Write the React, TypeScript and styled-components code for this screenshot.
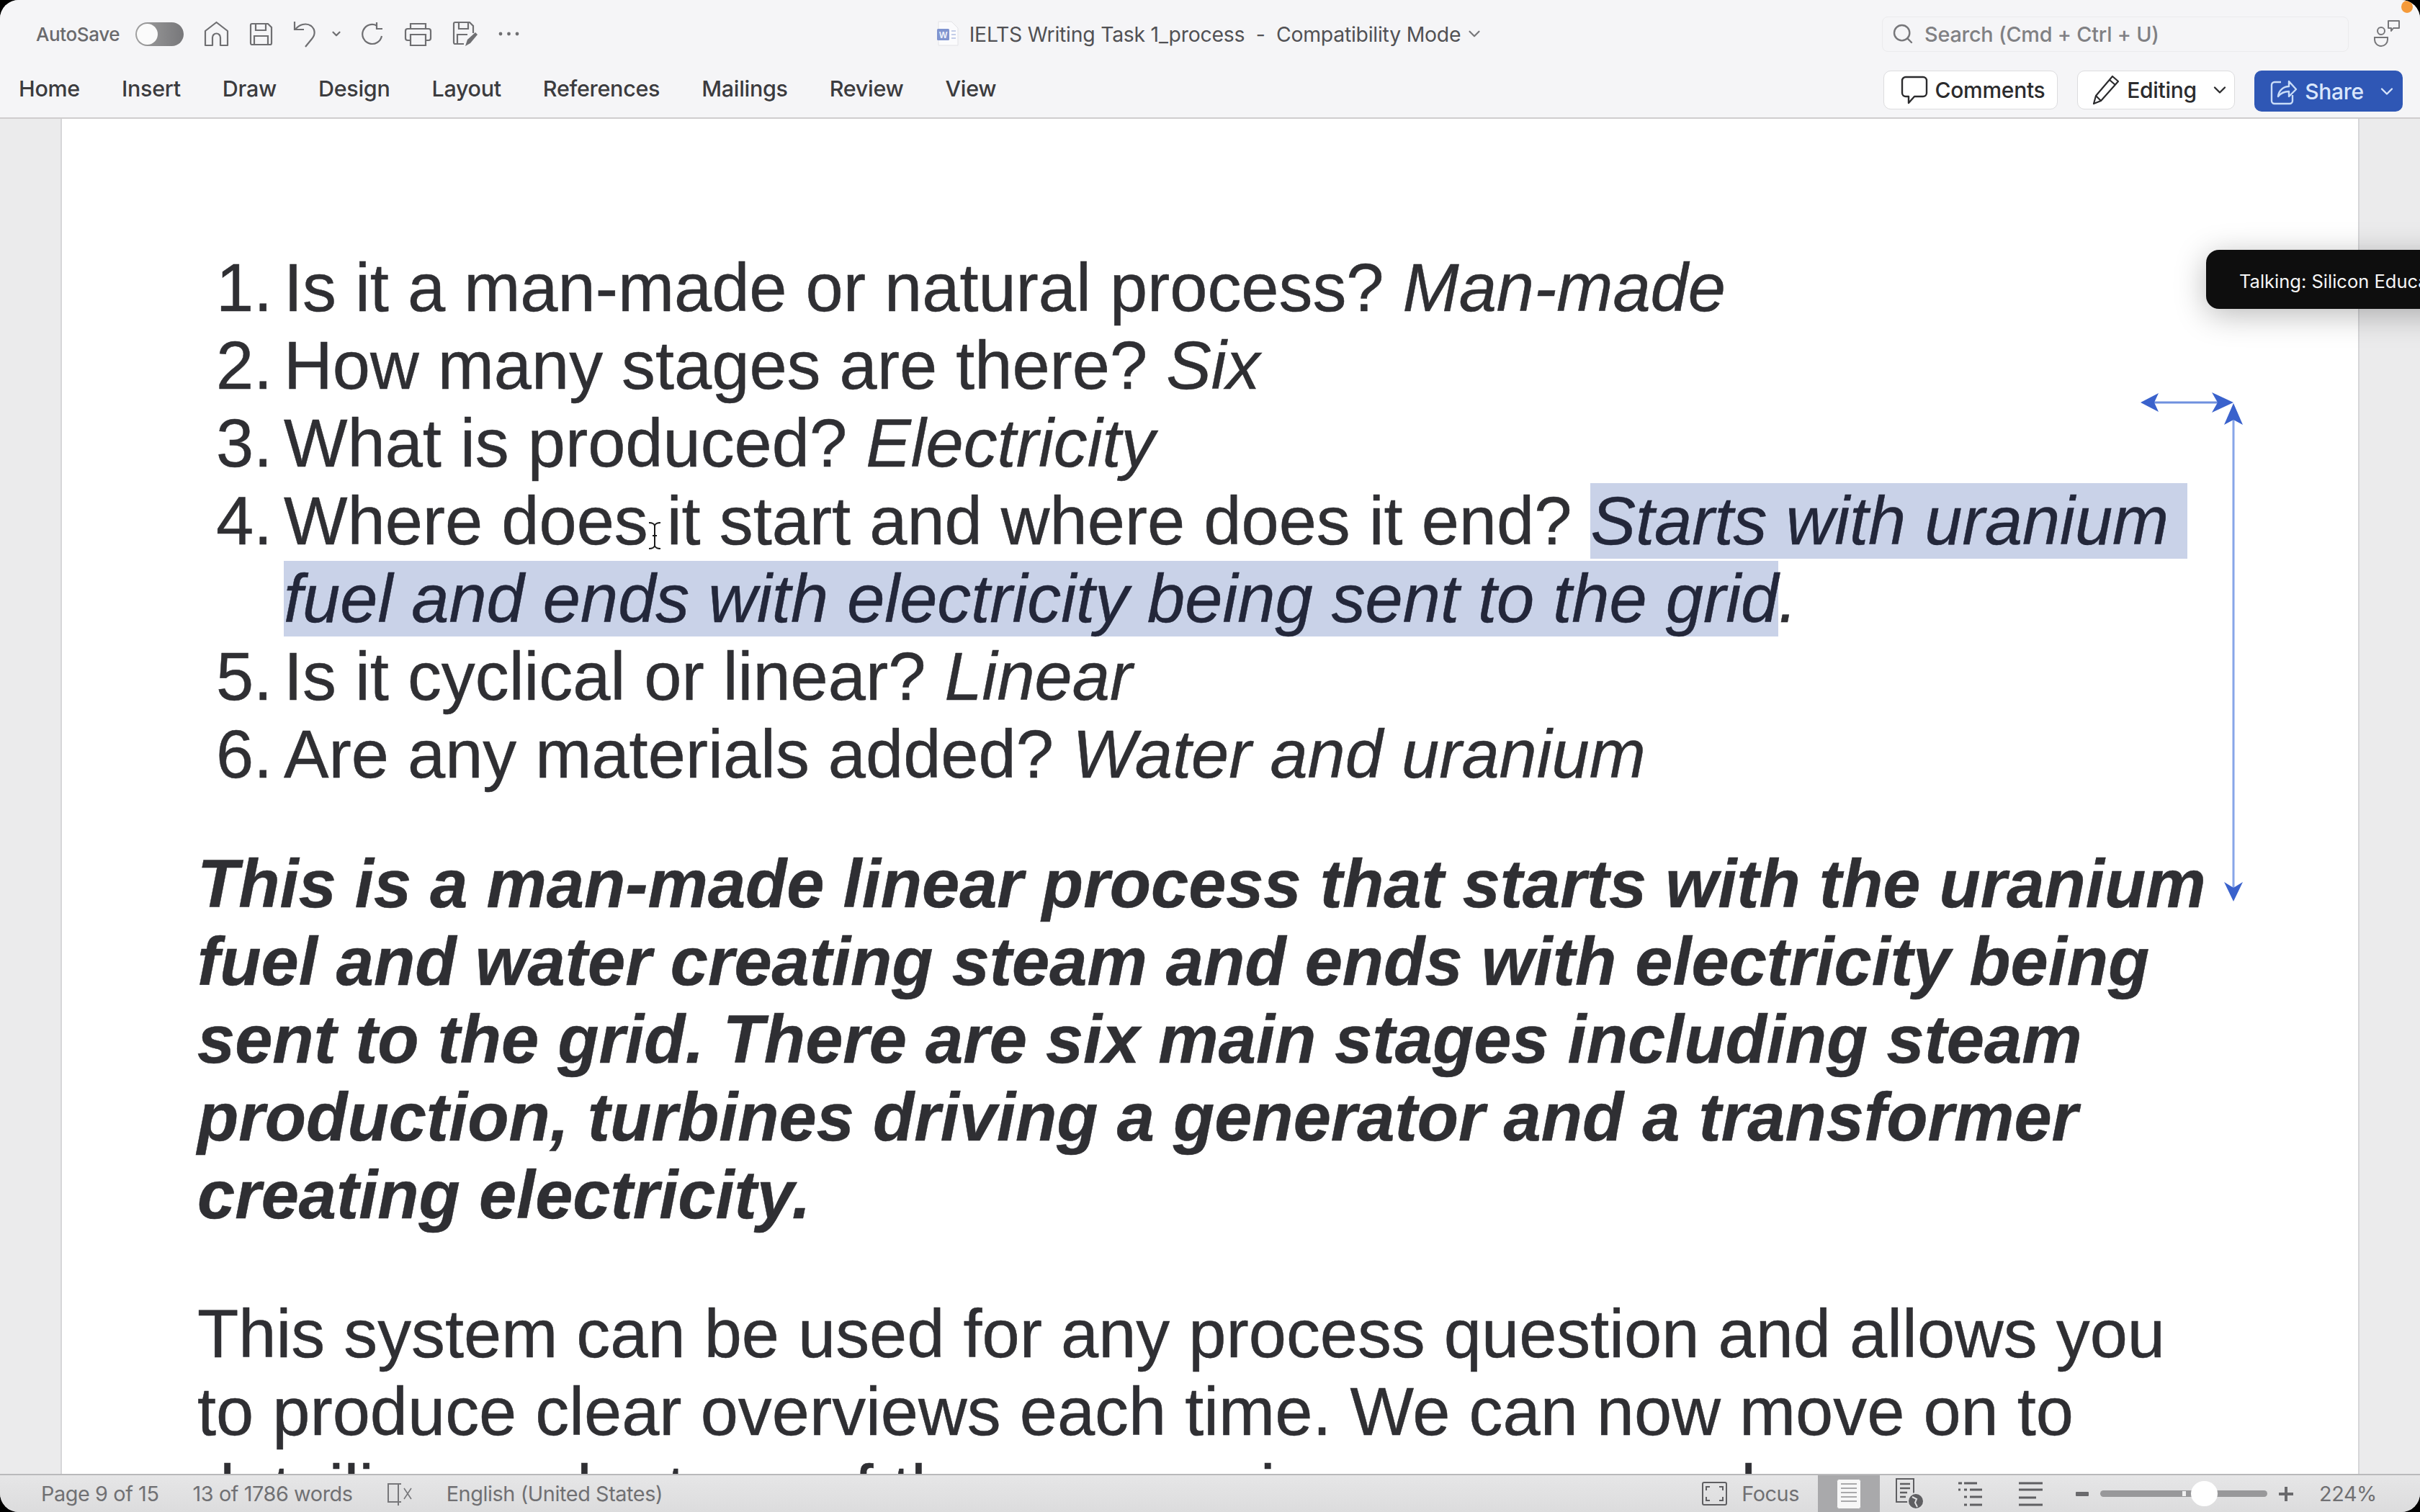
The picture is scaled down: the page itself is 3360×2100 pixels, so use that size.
import React from 'react';
import styled, { createGlobalStyle } from 'styled-components';
import { ChevronDown, Search } from 'lucide-react';

const GlobalStyle = createGlobalStyle`
  html, body { margin: 0; padding: 0; background: #000; }
  body { width: 3360px; height: 2100px; overflow: hidden; font-family: "Liberation Sans", Arial, sans-serif; }
`;

const Window = styled.div`
  position: relative;
  width: 3360px;
  height: 2100px;
  display: flex;
  flex-direction: column;
  overflow: hidden;
  border-radius: 26px;
  background: #ebebec;
`;

const Toolbar = styled.header`
  flex: none;
  height: 165px;
  box-sizing: border-box;
  background: #f5f5f7;
  border-bottom: 2px solid #cfcdce;
  display: flex;
  flex-direction: column;
`;

const TitleRow = styled.div`
  height: 94px;
  display: grid;
  grid-template-columns: 1fr auto 1fr;
  align-items: center;
`;

const QuickAccess = styled.div`
  display: flex;
  align-items: center;
  gap: 28px;
  padding-left: 50px;
  color: #6f6f72;
`;

const AutoSaveLabel = styled.span`
  font: 500 26px Inter, sans-serif;
  letter-spacing: -0.4px;
  color: #6a6a6d;
  margin-right: -6px;
`;

const Toggle = styled.div`
  width: 67px;
  height: 33px;
  box-sizing: border-box;
  border-radius: 17px;
  background: linear-gradient(90deg, #a0a0a0, #77777a);
  padding: 2px;
  display: flex;
`;

const ToggleKnob = styled.div`
  width: 29px;
  height: 29px;
  border-radius: 50%;
  background: #fbfbfb;
`;

const Title = styled.div`
  display: flex;
  align-items: center;
  gap: 14px;
  font: 400 28.4px Inter, sans-serif;
  letter-spacing: -0.25px;
  color: #515154;
  white-space: pre;
`;

const TitleRight = styled.div`
  display: flex;
  align-items: center;
  justify-content: flex-end;
  gap: 34px;
  padding-right: 25px;
`;

const SearchBox = styled.div`
  width: 648px;
  height: 49px;
  box-sizing: border-box;
  border: 1px solid #ebebed;
  border-radius: 8px;
  display: flex;
  align-items: center;
  gap: 14px;
  padding-left: 12px;
  font: 500 28.8px Inter, sans-serif;
  letter-spacing: -0.2px;
  color: #808083;
`;

const PeopleWrap = styled.div`
  position: relative;
  width: 40px;
  height: 40px;
  color: #77777a;
`;

const OrangeDot = styled.div`
  position: absolute;
  top: -26px;
  left: 39px;
  width: 16px;
  height: 17px;
  border-radius: 50%;
  background: #f59a3a;
`;

const TabRow = styled.div`
  flex: 1;
  display: flex;
  align-items: center;
  justify-content: space-between;
  padding: 0 24px 4px 26px;
`;

const Tabs = styled.nav`
  display: flex;
  gap: 58px;
  padding-bottom: 8px;
`;

const Tab = styled.span`
  font: 500 30.5px Inter, sans-serif;
  letter-spacing: -0.3px;
  color: #3b3b3e;
`;

const Actions = styled.div`
  display: flex;
  gap: 27px;
`;

const ActionButton = styled.div<{ $width: number; $primary?: boolean }>`
  width: ${p => p.$width}px;
  height: ${p => (p.$primary ? 57 : 54)}px;
  box-sizing: border-box;
  padding-left: 6px;
  border-radius: 10px;
  display: flex;
  align-items: center;
  justify-content: center;
  gap: 10px;
  font: 500 30px Inter, sans-serif;
  letter-spacing: -0.3px;
  background: ${p => (p.$primary ? '#2f57b5' : '#fff')};
  color: ${p => (p.$primary ? '#d9e6fb' : '#2b2b2d')};
  border: ${p => (p.$primary ? 'none' : '1px solid #dcdcde')};
`;

const ButtonChevron = styled(ChevronDown)`
  margin-left: 8px;
  margin-right: -8px;
`;

const DocArea = styled.main`
  flex: 1;
  min-height: 0;
  padding: 0 86px;
  overflow: hidden;
`;

const Page = styled.article`
  width: 3188px;
  height: 100%;
  box-sizing: border-box;
  background: #fff;
  box-shadow: 0 0 0 2px #d6d6d8;
  padding: 181px 0 0 188px;
  font-size: 93.8px;
  line-height: 108px;
  color: #2f2f33;
  -webkit-text-stroke: 0.5px #2f2f33;
`;

const List = styled.ol`
  list-style: none;
  margin: 0 0 72px;
  padding: 0 0 0 26px;
`;

const ListItem = styled.li`
  display: grid;
  grid-template-columns: 94px 1fr;
`;

const Line = styled.span`
  display: block;
  white-space: pre;
`;

const Answer = styled.em`
  font-style: italic;
`;

const Selected = styled.em`
  font-style: italic;
  background: #c9d2e8;
  color: #23273a;
  -webkit-text-stroke: 0.5px #23273a;
`;

const Summary = styled.p`
  margin: 0 0 85px;
  font-weight: 700;
  font-style: italic;
`;

const Body = styled.p`
  margin: 0;
`;

const StatusBar = styled.footer`
  flex: none;
  height: 53px;
  box-sizing: border-box;
  border-top: 2px solid #b9b9bb;
  background: linear-gradient(#e6e6e7, #dcdcdd);
  display: flex;
  align-items: center;
  justify-content: space-between;
  padding-left: 57px;
  font: 400 28.8px Inter, sans-serif;
  letter-spacing: -0.4px;
  color: #707073;
`;

const StatusLeft = styled.div`
  display: flex;
  align-items: center;
  gap: 47px;
`;

const StatusRight = styled.div`
  display: flex;
  align-items: center;
  height: 100%;
  padding-right: 60px;
`;

const FocusGroup = styled.div`
  display: flex;
  align-items: center;
  gap: 20px;
  margin-right: 26px;
`;

const ViewButton = styled.div<{ $active?: boolean; $gap?: number }>`
  width: ${p => (p.$active ? '86px' : 'auto')};
  height: 100%;
  display: flex;
  align-items: center;
  justify-content: center;
  background: ${p => (p.$active ? '#a9a9ab' : 'transparent')};
  margin-left: ${p => p.$gap ?? 0}px;
`;

const ZoomGroup = styled.div`
  display: flex;
  align-items: center;
  margin-left: 46px;
  gap: 16px;
`;

const SliderTrack = styled.div`
  position: relative;
  width: 232px;
  height: 9px;
  border-radius: 5px;
  background: #98989a;
`;

const SliderTick = styled.div`
  position: absolute;
  left: 114px;
  top: 1px;
  width: 5px;
  height: 7px;
  background: #f1f1f1;
`;

const SliderThumb = styled.div`
  position: absolute;
  left: 126px;
  top: -13px;
  width: 37px;
  height: 35px;
  border-radius: 50%;
  background: #fff;
`;

const ZoomValue = styled.span`
  margin-left: 36px;
`;

const Tooltip = styled.div`
  position: absolute;
  left: 3063px;
  top: 347px;
  width: 400px;
  height: 82px;
  box-sizing: border-box;
  padding: 4px 0 0 46px;
  display: flex;
  align-items: center;
  border-radius: 18px;
  background: #0e0e0e;
  color: #f6f6f6;
  font: 400 25.5px Inter, sans-serif;
  white-space: nowrap;
  box-shadow: 0 8px 44px rgba(0, 0, 0, 0.28);
`;

const Overlay = styled.svg`
  position: absolute;
  pointer-events: none;
`;

const HomeIcon = () => (
  <svg width="35" height="36" viewBox="0 0 35 36" fill="none" stroke="currentColor" strokeWidth="2.2">
    <path d="M2 34V14L17.5 2 33 14v20H23V23a5.5 5.5 0 0 0-11 0v11Z" strokeLinejoin="round" />
  </svg>
);

const SaveIcon = () => (
  <svg width="33" height="33" viewBox="0 0 33 33" fill="none" stroke="currentColor" strokeWidth="2.2">
    <path d="M2 4a2 2 0 0 1 2-2h22l5 5v22a2 2 0 0 1-2 2H4a2 2 0 0 1-2-2Z" />
    <path d="M9 2v9h14V2M7 31V19h19v12" />
  </svg>
);

const UndoIcon = () => (
  <svg width="32" height="38" viewBox="0 0 32 38" fill="none" stroke="currentColor" strokeWidth="2.2">
    <path d="M2 2v11h13" />
    <path d="M3 13C8 6 18 3 25 8c6 5 6 12 1 18l-9 11" />
  </svg>
);

const RedoIcon = () => (
  <svg width="32" height="33" viewBox="0 0 32 33" fill="none" stroke="currentColor" strokeWidth="2.2">
    <path d="M29 19a13.5 13.5 0 1 1-7-14.5" />
    <path d="M22 0v9h8" />
  </svg>
);

const PrintIcon = () => (
  <svg width="39" height="33" viewBox="0 0 39 33" fill="none" stroke="currentColor" strokeWidth="2.2">
    <path d="M9 9V2h21v7" />
    <path d="M9 25H5a3 3 0 0 1-3-3V12a3 3 0 0 1 3-3h29a3 3 0 0 1 3 3v10a3 3 0 0 1-3 3h-4" />
    <path d="M9 17h21v15H9Z" />
  </svg>
);

const SaveEditIcon = () => (
  <svg width="36" height="36" viewBox="0 0 36 36" fill="none" stroke="currentColor" strokeWidth="2.2">
    <path d="M16 32H4a2 2 0 0 1-2-2V4a2 2 0 0 1 2-2h20l5 5v10" />
    <path d="M9 2v9h13V2M7 31V19h14" />
    <path d="M18 35l3-9 11-10 3 3-10 12Z" fill="currentColor" stroke="none" />
  </svg>
);

const DotsIcon = () => (
  <svg width="29" height="6" viewBox="0 0 29 6" fill="currentColor">
    <circle cx="3" cy="3" r="2.4" />
    <circle cx="14.5" cy="3" r="2.4" />
    <circle cx="26" cy="3" r="2.4" />
  </svg>
);

const WordIcon = () => (
  <svg width="32" height="36" viewBox="0 0 32 36">
    <path d="M3 1h18l9 9v24H3Z" fill="#fbfbfd" stroke="#e2e2e6" strokeWidth="1" />
    <rect x="1" y="11" width="17" height="16" rx="1.5" fill="#8094cf" />
    <text x="9.5" y="23.5" fontSize="12" fontFamily="Liberation Sans" fontWeight="700" fill="#eef1fa" textAnchor="middle">W</text>
    <path d="M21 14h6M21 19h6M21 24h6" stroke="#c3cde8" strokeWidth="2" />
  </svg>
);

const PeopleIcon = () => (
  <svg width="40" height="40" viewBox="0 0 40 40" fill="none" stroke="currentColor" strokeWidth="2">
    <circle cx="11" cy="16" r="5" />
    <path d="M2 25h18v3a9 9 0 0 1-18 0Z" />
    <path d="M21 2h15v10H28l-3 4v-4h-4Z" strokeLinejoin="round" />
  </svg>
);

const CommentIcon = () => (
  <svg width="38" height="40" viewBox="0 0 38 40" fill="none" stroke="#2b2b2d" strokeWidth="2.4">
    <path d="M7 2h24a5 5 0 0 1 5 5v17a5 5 0 0 1-5 5H19l-8 9v-9H7a5 5 0 0 1-5-5V7a5 5 0 0 1 5-5Z" strokeLinejoin="round" />
  </svg>
);

const PencilIcon = () => (
  <svg width="38" height="42" viewBox="0 0 38 42" fill="none" stroke="#2b2b2d" strokeWidth="2.2">
    <path d="M2 40l3-11L28 2l8 7L12 36Z" strokeLinejoin="round" />
    <path d="M24 7l8 7M5 29l7 7" />
  </svg>
);

const ShareIcon = () => (
  <svg width="38" height="40" viewBox="0 0 38 40" fill="none" stroke="#c8dcf8" strokeWidth="2.4">
    <path d="M15 7H6a4 4 0 0 0-4 4v22a4 4 0 0 0 4 4h21a4 4 0 0 0 4-4v-8" />
    <path d="M11 27c1-9 8-14 15-14V6l10 11-10 10v-7c-6 0-11 2-15 7Z" strokeLinejoin="round" />
  </svg>
);

const BookIcon = () => (
  <svg width="36" height="32" viewBox="0 0 36 32" fill="none" stroke="#77777a" strokeWidth="2">
    <path d="M16 2H2v25h14M16 2v30M16 2h4M16 27h4" />
    <path d="M24 8l10 15M34 8L24 23" strokeWidth="1.6" />
  </svg>
);

const FocusIcon = () => (
  <svg width="35" height="33" viewBox="0 0 35 33" fill="none" stroke="#5f5f62" strokeWidth="2">
    <rect x="1" y="1" width="33" height="31" rx="2" />
    <path d="M6 12V7h5M29 12V7h-5M6 21v5h5M29 21v5h-5" />
  </svg>
);

const PrintLayoutIcon = () => (
  <svg width="34" height="42" viewBox="0 0 34 42" fill="#f7f7f7" stroke="#a9a9ab">
    <rect x="0.5" y="0.5" width="33" height="41" rx="3" />
    <path d="M6 7h22M6 13h22M6 19h22M6 25h22M6 31h22" stroke="#a9a9ab" strokeWidth="2" />
  </svg>
);

const WebLayoutIcon = () => (
  <svg width="40" height="44" viewBox="0 0 40 44" fill="none" stroke="#5f5f62" strokeWidth="2">
    <rect x="1" y="1" width="24" height="32" />
    <path d="M6 8h14M6 14h14M6 20h10M6 26h8" strokeWidth="2.4" />
    <circle cx="28" cy="32" r="11" fill="#5f5f62" stroke="#e1e1e2" />
    <path d="M23 26l6 3-2 5 3 6" stroke="#e1e1e2" />
  </svg>
);

const OutlineIcon = () => (
  <svg width="34" height="36" viewBox="0 0 34 36" fill="none" stroke="#5f5f62" strokeWidth="3">
    <path d="M0 3h5M8 3h18M8 12h4M16 12h17M8 22h4M16 22h17M8 33h4M16 33h17M0 12h3" />
  </svg>
);

const DraftIcon = () => (
  <svg width="33" height="36" viewBox="0 0 33 36" fill="none" stroke="#5f5f62" strokeWidth="3.2">
    <path d="M0 3h33M0 12h33M0 23h24M0 33h33" />
  </svg>
);

const Arrows = () => (
  <Overlay style={{ left: 2960, top: 540 }} width="170" height="725" viewBox="0 0 170 725">
    <path d="M30 19h100" stroke="#6f90df" strokeWidth="3" />
    <path d="M12 19l25-13-6 13 6 13Z" fill="#3a62cc" />
    <path d="M141 19l-30-14 8 14-8 14Z" fill="#3a62cc" />
    <path d="M141 40v660" stroke="#88a5e8" strokeWidth="3" />
    <path d="M141 20l-13 30 13-7 13 7Z" fill="#3a62cc" />
    <path d="M141 712l-13-27 13 8 13-8Z" fill="#3a62cc" />
  </Overlay>
);

const TextCursor = () => (
  <Overlay style={{ left: 899, top: 724 }} width="20" height="40" viewBox="0 0 20 40" fill="none" stroke="#1a1a1a" strokeWidth="2">
    <path d="M2 2c4 0 7 1 8 4 1-3 4-4 8-4M10 6v28M2 38c4 0 7-1 8-4 1 3 4 4 8 4M7 20h6" />
  </Overlay>
);

const App: React.FC = () => {
  return (
    <Window>
      <GlobalStyle />
      <Toolbar>
        <TitleRow>
          <QuickAccess>
            <AutoSaveLabel>AutoSave</AutoSaveLabel>
            <Toggle><ToggleKnob /></Toggle>
            <HomeIcon />
            <SaveIcon />
            <UndoIcon />
            <ChevronDown size={18} strokeWidth={3} style={{ marginLeft: -9, marginRight: -3 }} />
            <RedoIcon />
            <PrintIcon />
            <SaveEditIcon />
            <DotsIcon />
          </QuickAccess>
          <Title>
            <WordIcon />
            <span>IELTS Writing Task 1_process  -  Compatibility Mode</span>
            <ChevronDown size={26} strokeWidth={2} style={{ marginLeft: -8 }} color="#77777a" />
          </Title>
          <TitleRight>
            <SearchBox>
              <Search size={32} strokeWidth={1.8} color="#77777a" />
              <span>Search (Cmd + Ctrl + U)</span>
            </SearchBox>
            <PeopleWrap>
              <PeopleIcon />
              <OrangeDot />
            </PeopleWrap>
          </TitleRight>
        </TitleRow>
        <TabRow>
          <Tabs>
            {['Home', 'Insert', 'Draw', 'Design', 'Layout', 'References', 'Mailings', 'Review', 'View'].map(t => (
              <Tab key={t}>{t}</Tab>
            ))}
          </Tabs>
          <Actions>
            <ActionButton $width={242}>
              <CommentIcon />
              Comments
            </ActionButton>
            <ActionButton $width={219}>
              <PencilIcon />
              Editing
              <ButtonChevron size={28} strokeWidth={2} />
            </ActionButton>
            <ActionButton $width={206} $primary>
              <ShareIcon />
              Share
              <ButtonChevron size={28} strokeWidth={2} />
            </ActionButton>
          </Actions>
        </TabRow>
      </Toolbar>

      <DocArea>
        <Page>
          <List>
            <ListItem><span>1.</span><Line>Is it a man-made or natural process? <Answer>Man-made</Answer></Line></ListItem>
            <ListItem><span>2.</span><Line>How many stages are there? <Answer>Six</Answer></Line></ListItem>
            <ListItem><span>3.</span><Line>What is produced? <Answer>Electricity</Answer></Line></ListItem>
            <ListItem>
              <span>4.</span>
              <div>
                <Line>Where does it start and where does it end? <Selected>Starts with uranium </Selected></Line>
                <Line><Selected>fuel and ends with electricity being sent to the grid</Selected><Answer>.</Answer></Line>
              </div>
            </ListItem>
            <ListItem><span>5.</span><Line>Is it cyclical or linear? <Answer>Linear</Answer></Line></ListItem>
            <ListItem><span>6.</span><Line>Are any materials added? <Answer>Water and uranium</Answer></Line></ListItem>
          </List>
          <Summary>
            <Line>This is a man-made linear process that starts with the uranium</Line>
            <Line>fuel and water creating steam and ends with electricity being</Line>
            <Line>sent to the grid. There are six main stages including steam</Line>
            <Line>production, turbines driving a generator and a transformer</Line>
            <Line>creating electricity.</Line>
          </Summary>
          <Body>
            <Line>This system can be used for any process question and allows you</Line>
            <Line>to produce clear overviews each time. We can now move on to</Line>
            <Line>detailing each stage of the process in sequence and</Line>
          </Body>
        </Page>
      </DocArea>

      <StatusBar>
        <StatusLeft>
          <span>Page 9 of 15</span>
          <span>13 of 1786 words</span>
          <BookIcon />
          <span>English (United States)</span>
        </StatusLeft>
        <StatusRight>
          <FocusGroup>
            <FocusIcon />
            <span>Focus</span>
          </FocusGroup>
          <ViewButton $active><PrintLayoutIcon /></ViewButton>
          <ViewButton $gap={22}><WebLayoutIcon /></ViewButton>
          <ViewButton $gap={47}><OutlineIcon /></ViewButton>
          <ViewButton $gap={50}><DraftIcon /></ViewButton>
          <ZoomGroup>
            <svg width="18" height="6"><rect width="18" height="6" rx="1" fill="#6a6a6d" /></svg>
            <SliderTrack>
              <SliderTick />
              <SliderThumb />
            </SliderTrack>
            <svg width="20" height="20"><path d="M10 0v20M0 10h20" stroke="#6a6a6d" strokeWidth="4" /></svg>
          </ZoomGroup>
          <ZoomValue>224%</ZoomValue>
        </StatusRight>
      </StatusBar>

      <Tooltip>Talking: Silicon Education</Tooltip>
      <Arrows />
      <TextCursor />
    </Window>
  );
};

export default App;
